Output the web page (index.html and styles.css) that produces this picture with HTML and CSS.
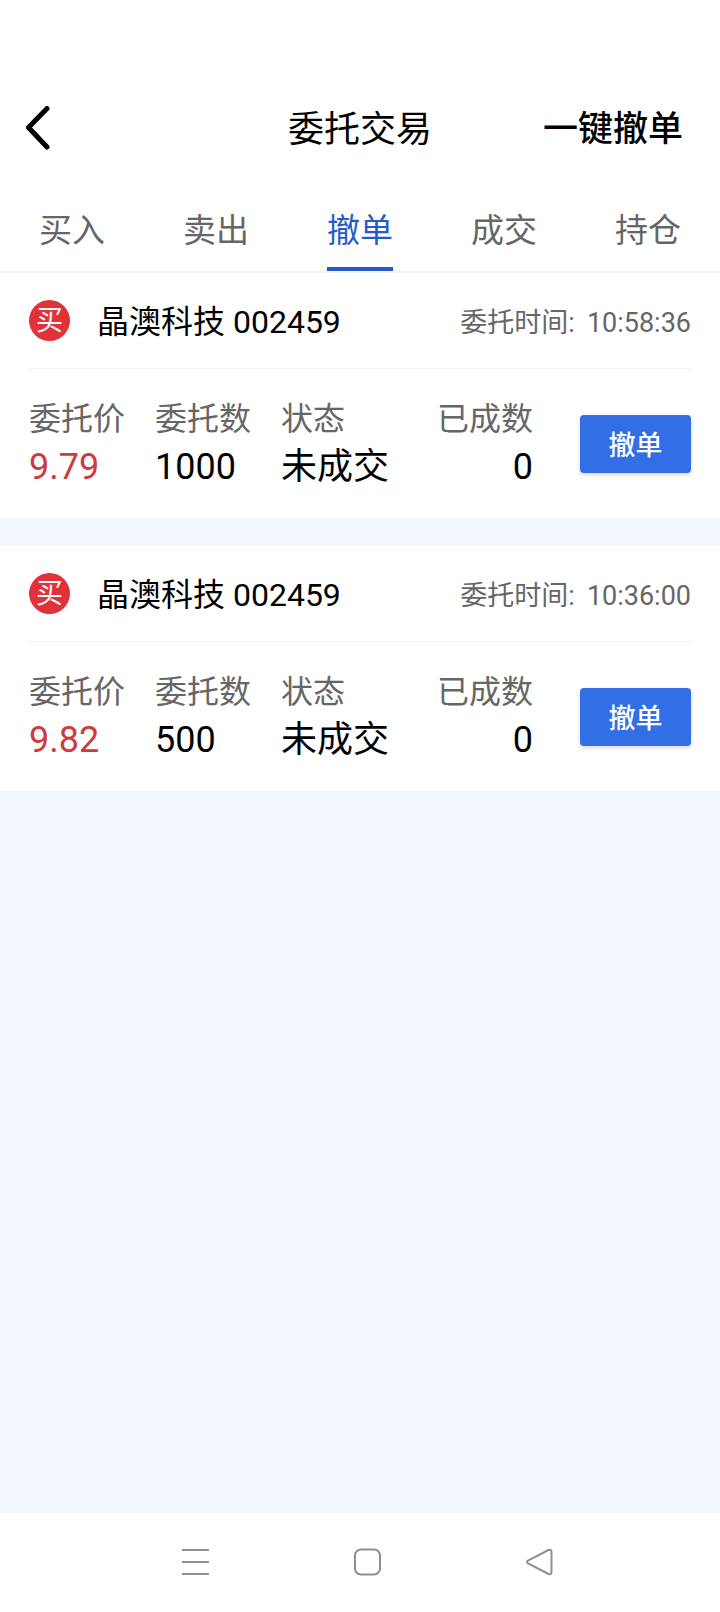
FILE: index.html
```html
<!DOCTYPE html>
<html lang="zh-CN">
<head>
  <meta charset="UTF-8" />
  <meta name="viewport" content="width=device-width, initial-scale=1.0" />
  <title>委托交易</title>
  <link rel="stylesheet" href="styles.css">
</head>
<body>

  <header class="header">
    <button type="button" class="back" aria-label="返回">
      <svg width="24" height="44" viewBox="0 0 24 44" fill="none" stroke="currentColor" stroke-width="5" stroke-linecap="round" stroke-linejoin="round">
        <path d="M21 2.5 L2.5 21.5 L21 41" />
      </svg>
    </button>
    <h1 class="title">委托交易</h1>
    <button type="button" class="cancel-all">一键撤单</button>
  </header>

  <nav class="tabs">
    <a href="#buy" class="tab"><span>买入</span></a>
    <a href="#sell" class="tab"><span>卖出</span></a>
    <a href="#cancel" class="tab active"><span>撤单</span></a>
    <a href="#deal" class="tab"><span>成交</span></a>
    <a href="#hold" class="tab"><span>持仓</span></a>
  </nav>

  <main class="orders">
    <section class="order">
      <div class="order-head">
        <span class="badge">买</span>
        <h2 class="stock">晶澳科技 002459</h2>
        <p class="time"><span>委托时间:</span><time>10:58:36</time></p>
      </div>
      <div class="order-body">
        <dl class="fields">
          <div><dt>委托价</dt><dd class="price">9.79</dd></div>
          <div><dt>委托数</dt><dd>1000</dd></div>
          <div><dt>状态</dt><dd>未成交</dd></div>
          <div><dt>已成数</dt><dd>0</dd></div>
        </dl>
        <button type="button" class="cancel">撤单</button>
      </div>
    </section>

    <section class="order">
      <div class="order-head">
        <span class="badge">买</span>
        <h2 class="stock">晶澳科技 002459</h2>
        <p class="time"><span>委托时间:</span><time>10:36:00</time></p>
      </div>
      <div class="order-body">
        <dl class="fields">
          <div><dt>委托价</dt><dd class="price">9.82</dd></div>
          <div><dt>委托数</dt><dd>500</dd></div>
          <div><dt>状态</dt><dd>未成交</dd></div>
          <div><dt>已成数</dt><dd>0</dd></div>
        </dl>
        <button type="button" class="cancel">撤单</button>
      </div>
    </section>
  </main>

  <footer class="system-bar">
    <button type="button" aria-label="菜单">
      <svg width="28" height="28" viewBox="0 0 28 28" fill="none" stroke="currentColor" stroke-width="2">
        <path d="M0 2 H27 M0 14 H27 M0 26 H27" />
      </svg>
    </button>
    <button type="button" aria-label="主屏幕">
      <svg width="28" height="28" viewBox="0 0 28 28" fill="none" stroke="currentColor" stroke-width="2">
        <rect x="1" y="1.5" width="25" height="25" rx="6" />
      </svg>
    </button>
    <button type="button" aria-label="返回上一页">
      <svg width="28" height="28" viewBox="0 0 28 28" fill="none" stroke="currentColor" stroke-width="2">
        <path d="M2 12.6 L22.5 2 Q25.5 1 25.5 4 V24 Q25.5 27 22.5 26 L2 15.4 Q-0.2 14 2 12.6 Z" />
      </svg>
    </button>
  </footer>

</body>
</html>
```
FILE: styles.css
```css
* {
  box-sizing: border-box;
}
body {
  margin: 0;
  min-height: 100vh;
  display: flex;
  flex-direction: column;
  background: #f3f6fe;
  color: #000;
  font-family: Roboto, "Noto Sans CJK SC", sans-serif;
}
h1, h2, p, dl, dd {
  margin: 0;
  font-weight: 400;
}
button {
  border: 0;
  padding: 0;
  background: none;
  color: inherit;
  font-family: inherit;
  cursor: pointer;
}
svg {
  display: block;
}

/* header */
.header {
  display: grid;
  grid-template-columns: 1fr auto 1fr;
  align-items: center;
  padding: 80px 26px 0;
  height: 176px;
  background: #fff;
}
.back {
  justify-self: start;
}
.title {
  padding-bottom: 4px;
  font-size: 36px;
}
.cancel-all {
  justify-self: end;
  padding: 0 11px 5px 0;
  font-size: 35px;
  font-weight: 500;
}

/* tabs */
.tabs {
  display: grid;
  grid-template-columns: repeat(5, 1fr);
  background: #fff;
  border-bottom: 2px solid #f3f3f5;
}
.tab {
  display: flex;
  justify-content: center;
  color: #666;
  font-size: 33px;
  line-height: 73px;
  text-decoration: none;
}
.tab span {
  padding-top: 18px;
  border-bottom: 4px solid transparent;
}
.tab.active {
  color: #235cc8;
}
.tab.active span {
  border-color: #235cc8;
}

/* order cards */
.orders {
  flex: 1;
  display: flex;
  flex-direction: column;
  gap: 28px;
}
.order {
  padding: 0 29px;
  background: #fff;
}
.order-head {
  display: flex;
  align-items: center;
  height: 96px;
  border-bottom: 1px solid #f3f3f3;
}
.badge {
  width: 41px;
  height: 41px;
  border-radius: 50%;
  background: #e03238;
  color: #fff;
  font-size: 27px;
  line-height: 43px;
  text-align: center;
}
.stock {
  margin-left: 27px;
  padding-bottom: 3px;
  font-size: 32px;
}
.time {
  display: flex;
  align-items: baseline;
  gap: 12px;
  margin-left: auto;
  color: #666;
  font-size: 27px;
}
.order-body {
  display: flex;
  align-items: center;
  gap: 47px;
  padding: 27px 0;
}
.fields {
  flex: 1;
  display: grid;
  grid-template-columns: repeat(4, 1fr);
  white-space: nowrap;
}
.fields div:last-child {
  text-align: right;
}
dt {
  color: #666;
  font-size: 32px;
  line-height: 47px;
}
dd {
  font-size: 36px;
  line-height: 48px;
}
.price {
  color: #cf3a3e;
}
.cancel {
  width: 111px;
  height: 58px;
  border-radius: 4px;
  background: #326fe6;
  box-shadow: 0 2px 4px rgba(0, 0, 0, 0.15);
  color: #fff;
  font-size: 27px;
  font-weight: 500;
}

/* bottom bar */
.system-bar {
  display: flex;
  justify-content: center;
  gap: 144px;
  padding: 35px 0 36px 15px;
  background: #fff;
  color: #8f8f8f;
}
```
